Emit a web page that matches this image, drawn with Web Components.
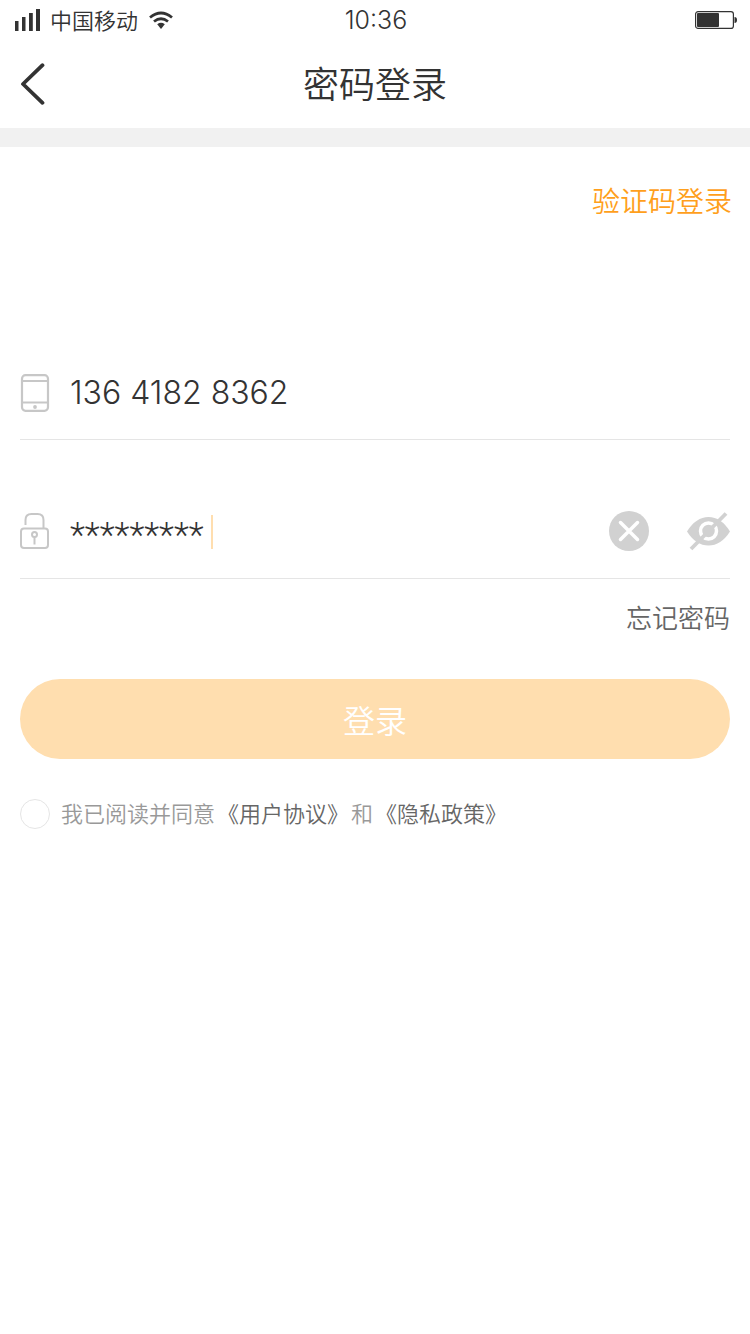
<!DOCTYPE html>
<html lang="zh-CN">
<head>
<meta charset="utf-8">
<meta name="viewport" content="width=device-width, initial-scale=1">
<title>密码登录</title>
<style>
  body { margin: 0; background: #fff; color: #333; font-family: "Noto Sans CJK SC", sans-serif; font-weight: 350; }
</style>
</head>
<body>
<login-page></login-page>

<template id="status-bar">
  <style>
    :host { display: grid; grid-template-columns: 1fr auto 1fr; align-items: center; height: 40px; padding: 0 13px 0 15px; font-size: 22px; }
    svg { display: block; }
    .carrier { display: flex; align-items: center; gap: 10px; line-height: 32px; }
    .name { padding-bottom: 2px; }
    time { font-family: Inter, sans-serif; font-size: 25px; line-height: 32px; }
    .battery { justify-self: end; }
  </style>
  <div class="carrier">
    <svg width="25" height="22" viewBox="0 0 25 22" fill="#333" aria-hidden="true"><path d="M0 12h3.500v10H0zM7 8h3.500v14H7zM14 4h3.800v18H14zM21 0h4v22h-4z"/></svg>
    <span class="name"><slot></slot></span>
    <svg width="26" height="20" viewBox="0 0 26 20" fill="none" stroke="#333" stroke-width="2.800" aria-hidden="true"><path d="M2 7.500Q13-1.500 24 7.500M6 11.500Q13 6 20 11.500"/><path d="M9.200 14.200Q13 11.400 16.800 14.200L13 19z" fill="#333" stroke="none"/></svg>
  </div>
  <time>10:36</time>
  <svg class="battery" width="42" height="18" viewBox="0 0 42 18" aria-hidden="true"><rect x=".6" y=".6" width="37.800" height="16.800" rx="2.500" fill="none" stroke="#333" stroke-width="1.200"/><rect x="2" y="2" width="22" height="14" rx="1" fill="#333"/><path d="M39.500 6q2.500 0 2.500 3t-2.500 3z" fill="#333"/></svg>
</template>

<template id="nav-header">
  <style>
    :host { display: grid; grid-template-columns: 1fr auto 1fr; align-items: center; height: 88px; padding: 0 20px; border-bottom: 19px solid #f1f1f1; }
    button { all: unset; justify-self: start; cursor: pointer; }
    svg { display: block; }
    h1 { margin: 0; padding-bottom: 4px; font-size: 36px; line-height: 48px; font-weight: inherit; }
  </style>
  <button type="button" aria-label="返回"><svg width="26" height="42" viewBox="0 0 26 42" fill="none" stroke="#333" stroke-width="3.800" stroke-linecap="round" stroke-linejoin="round"><path d="M22.500 2.200 3 21l19.500 18.800"/></svg></button>
  <h1><slot></slot></h1>
</template>

<template id="form-row">
  <style>
    :host { display: flex; align-items: center; height: 93px; border-bottom: 1px solid #e5e5e5; }
    .icon { flex: none; width: 50px; }
    .content { flex: 1; min-width: 0; display: flex; align-items: center; }
    .actions { display: flex; align-items: center; gap: 37px; }
  </style>
  <div class="icon"><slot name="icon"></slot></div>
  <div class="content"><slot></slot></div>
  <div class="actions"><slot name="actions"></slot></div>
</template>

<template id="user-agreement">
  <style>
    :host { display: flex; align-items: center; gap: 11px; color: #999; font-size: 22px; line-height: 32px; }
    input { appearance: none; flex: none; box-sizing: border-box; width: 30px; height: 30px; margin: 0; border: 1px solid #e5e5e5; border-radius: 50%; background: #fff; }
    input:checked { background: #ff9f1c; }
    label { margin: -4px 0 0; }
    a { margin: 0 2px; color: #666; text-decoration: none; }
  </style>
  <input type="checkbox" id="agree">
  <label for="agree">我已阅读并同意<a href="#terms">《用户协议》</a>和<a href="#privacy">《隐私政策》</a></label>
</template>

<template id="login-page">
  <style>
    :host { display: block; }
    main { padding: 33px 20px; }
    a { display: block; width: fit-content; margin-left: auto; text-decoration: none; }
    svg { display: block; }
    .code { margin-right: -2px; margin-bottom: 126px; color: #ff9f1c; font-size: 28px; line-height: 40px; }
    .forgot { margin-top: 18px; color: #666; font-size: 26px; line-height: 40px; }
    form-row + form-row { margin-top: 45px; }
    input { box-sizing: border-box; border: 0; padding: 0; margin: 0; outline: 0; background: none; color: #333; height: 44px; }
    #phone { width: 100%; font: 350 32px Inter, sans-serif; }
    #password { width: 136px; padding-top: 8px; field-sizing: content; font: 300 35px Roboto, sans-serif; }
    .caret { width: 2px; height: 34px; margin-left: 5px; background: #ffdeaf; }
    .tool { all: unset; cursor: pointer; }
    .login { display: block; width: 100%; height: 80px; margin: 42px 0 40px; padding: 0; border: 0; border-radius: 40px; background: #ffdeaf; color: #fff; font: 350 32px "Noto Sans CJK SC", sans-serif; }
  </style>
  <status-bar>中国移动</status-bar>
  <nav-header>密码登录</nav-header>
  <main>
    <a class="code" href="#code">验证码登录</a>
    <form-row>
      <svg slot="icon" width="30" height="38" viewBox="0 0 30 38" fill="none" stroke="#c7c7c7" stroke-width="2.200" aria-hidden="true"><rect x="2" y="1.200" width="26" height="35.600" rx="3.500"/><path d="M2 7h26M2 28.500h26"/><circle cx="15" cy="33" r="1.900" fill="#c7c7c7" stroke="none"/></svg>
      <input id="phone" type="tel" value="136 4182 8362" aria-label="手机号">
    </form-row>
    <form-row>
      <svg slot="icon" width="30" height="38" viewBox="0 0 30 38" fill="none" stroke="#c7c7c7" stroke-width="2" aria-hidden="true"><rect x="1" y="15.500" width="27" height="19.500" rx="3"/><path d="M5.500 12V7q0-6 6-6h6q6 0 6 6v8.500M14.500 24v7.500"/><circle cx="14.500" cy="21.500" r="2.500"/></svg>
      <input id="password" type="text" value="*********" aria-label="密码" autocomplete="off"><span class="caret"></span>
      <button class="tool" slot="actions" type="button" aria-label="清除"><svg width="40" height="42" viewBox="0 0 40 42"><circle cx="20" cy="20" r="20" fill="#d1d1d1"/><path d="m11.500 11.500 17 17m0-17-17 17" stroke="#fff" stroke-width="3.500" stroke-linecap="round"/></svg></button>
      <button class="tool" slot="actions" type="button" aria-label="显示密码"><svg width="44" height="40" viewBox="0 0 44 40"><path d="M1 19.500Q10 5 22.500 5T44 19.500Q35 33.500 22.500 33.500T1 19.500z" fill="#d1d1d1"/><circle cx="22.500" cy="19" r="8" fill="none" stroke="#fff" stroke-width="3.500"/><path d="M5 37 40 1.500" stroke="#d1d1d1" stroke-width="3.800"/></svg></button>
    </form-row>
    <a class="forgot" href="#forgot">忘记密码</a>
    <button class="login" type="button">登录</button>
    <user-agreement></user-agreement>
  </main>
</template>

<script>
  for (const name of ["status-bar", "nav-header", "form-row", "user-agreement", "login-page"]) {
    customElements.define(name, class extends HTMLElement {
      constructor() {
        super();
        this.attachShadow({ mode: "open" }).append(document.getElementById(name).content.cloneNode(true));
      }
    });
  }
</script>
</body>
</html>
